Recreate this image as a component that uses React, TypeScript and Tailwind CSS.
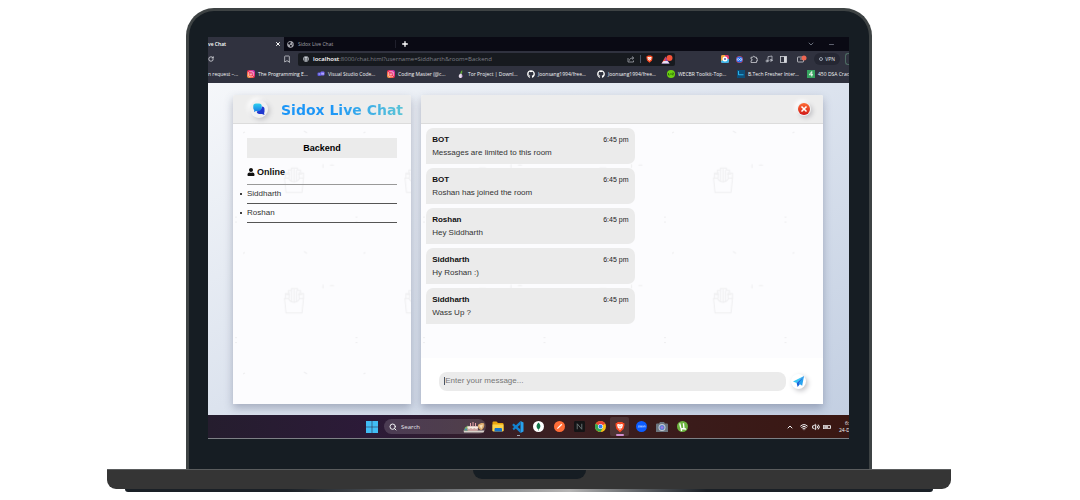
import type { ReactNode } from "react";
import {
  ChevronDown,
  ChevronUp,
  Bookmark,
  Minus,
  Music,
  Plus,
  RotateCw,
  Search,
  Volume2,
  Wifi,
  X,
} from "lucide-react";
import { FaBatteryThreeQuarters, FaGithub, FaGlobe, FaGlobeAmericas, FaInstagram, FaUser } from "react-icons/fa";

const messages = [
  { name: "BOT", text: "Messages are limited to this room", time: "6:45 pm" },
  { name: "BOT", text: "Roshan has joined the room", time: "6:45 pm" },
  { name: "Roshan", text: "Hey Siddharth", time: "6:45 pm" },
  { name: "Siddharth", text: "Hy Roshan :)", time: "6:45 pm" },
  { name: "Siddharth", text: "Wass Up ?", time: "6:45 pm" },
];

const users = ["Siddharth", "Roshan"];

function Instagram() {
  return (
    <span className="flex size-[8px] items-center justify-center rounded-[2px] bg-linear-to-tr from-[#fdb13c] via-[#f0264f] to-[#c218c8] text-white">
      <FaInstagram className="size-[6px]" />
    </span>
  );
}

function BraveLion({ className }: { className: string }) {
  return (
    <svg viewBox="0 0 20 22" className={className}>
      <path d="M5.5 1h9l2 2 2-.2L19 7l-1.800 8.200L10 21.500l-7.200-6.300L1 7l.5-4.200 2 .2z" fill="#fb4b22" />
      <path d="M4 6l3-1 3 1 3-1 3 1-1.500 6L10 17l-4.500-5z" fill="#fff" />
      <path d="M6.500 8l2.500.8-.5 2zM13.500 8l-2.500.8.5 2zM10 12l1.500 1.500L10 15l-1.500-1.500z" fill="#fb4b22" />
    </svg>
  );
}

const bookmarks: { label: string; icon: ReactNode }[] = [
  { label: "The Programming E...", icon: <Instagram /> },
  {
    label: "Visual Studio Code...",
    icon: (
      <svg viewBox="0 0 16 16" className="size-[8px]">
        <rect x="1" y="5" width="7" height="7" rx="2" fill="#5b57e0" />
        <rect x="7" y="3" width="8" height="8" rx="2" fill="#7b6cf6" />
        <path d="M3 8h3M10 6v3M12.500 6v3" stroke="#fff" strokeWidth="1.200" />
      </svg>
    ),
  },
  { label: "Coding Master (@c...", icon: <Instagram /> },
  {
    label: "Tor Project | Downl...",
    icon: (
      <svg viewBox="0 0 16 16" className="size-[8px]">
        <path d="M7 7c-4 2-5 8-1 9 5 1 6-5 3-9z" fill="#e6dcea" />
        <path d="M8 8c3 3 2 7-1 8 4-.500 6-4 1-8z" fill="#8c4aa6" />
        <path d="M7 7c0-3 1-5 4-7-1 2-1 3-1 4 2-1 2-1 3-1-3 1-3 2-4 5z" fill="#5fae35" />
      </svg>
    ),
  },
  { label: "Joonsang1994/free...", icon: <FaGithub className="size-[8px] text-white" /> },
  { label: "Joonsang1994/free...", icon: <FaGithub className="size-[8px] text-white" /> },
  {
    label: "WECBR Toolkit-Top...",
    icon: (
      <svg viewBox="0 0 16 16" className="size-[8px]">
        <circle cx="8" cy="8" r="8" fill="#6bd110" />
        <path d="M3 6v4h2.500M8 6v4M10.500 6H13l-2 4h2" stroke="#1f5206" strokeWidth="1.400" fill="none" />
      </svg>
    ),
  },
  {
    label: "B.Tech Fresher Inter...",
    icon: (
      <svg viewBox="0 0 16 16" className="size-[8px]">
        <rect width="16" height="16" fill="#0d4f7a" />
        <path d="M3 2v8M3 9.500h10" stroke="#29b1e8" strokeWidth="2" />
      </svg>
    ),
  },
  {
    label: "450 DSA Cracker",
    icon: (
      <svg viewBox="0 0 16 16" className="size-[8px]">
        <rect width="16" height="16" fill="#36a45f" />
        <path d="M9.500 13V3L4.500 9.500H12" stroke="#fff" strokeWidth="1.800" fill="none" />
      </svg>
    ),
  },
];

function BrowserChrome() {
  return (
    <header className="font-['Open_Sans','Noto_Sans',sans-serif] text-[6px] leading-[8px] text-gray-200">
      <div className="flex h-[14px] items-center bg-[#0a0a14]">
        <div className="flex h-full w-[76px] items-center justify-between bg-[#30323f] pr-[3px]">
          <span className="text-[5px] font-semibold text-white">ve Chat</span>
          <button type="button" aria-label="Close tab">
            <X className="size-[6px] text-white" strokeWidth={4} />
          </button>
        </div>
        <button type="button" className="flex h-full w-[111px] items-center gap-[4px] pl-[3px] text-[#a3a3ab]">
          <FaGlobeAmericas className="size-[7px]" />
          <span className="text-[5px]">Sidox Live Chat</span>
        </button>
        <span className="h-[8px] w-px bg-[#20202c]" />
        <button type="button" aria-label="New tab" className="ml-[5px]">
          <Plus className="size-[8px] text-white" strokeWidth={4} />
        </button>
        <button type="button" aria-label="Search tabs" className="ml-auto">
          <ChevronDown className="size-[8px] text-gray-400" />
        </button>
        <button type="button" aria-label="Minimise" className="mr-[14px] ml-[13px]">
          <Minus className="size-[7px] text-gray-400" />
        </button>
      </div>

      <div className="flex h-[16px] items-center bg-[#30323f]">
        <button type="button" aria-label="Reload">
          <RotateCw className="size-[6px]" strokeWidth={3} />
        </button>
        <button type="button" aria-label="Bookmark this page" className="ml-[69px]">
          <Bookmark className="size-[8px]" />
        </button>
        <div className="ml-[7px] flex h-[13px] flex-1 items-center rounded-[2px] bg-[#171a1f] pr-[2px] pl-[5px]">
          <FaGlobe className="size-[6px] text-gray-300" />
          <span className="ml-[4px] text-[6px] whitespace-nowrap text-[#7d7f86]">
            <span className="font-semibold text-white">localhost</span>:8000/chat.html?username=Siddharth&amp;room=Backend
          </span>
          <svg viewBox="0 0 16 16" className="ml-auto size-[8px]">
            <path d="M2 6v8h11v-3M5 11c0-4 3-5 8-5M10 3l3.500 3L10 9" fill="none" stroke="#a4a7ae" strokeWidth="1.600" />
          </svg>
          <span className="mx-[5px] h-[8px] w-px bg-gray-600" />
          <BraveLion className="h-[8px] w-[7px]" />
          <svg viewBox="0 0 24 18" className="ml-[8px] h-[9px] w-[12px]">
            <path d="M1 17L9 3l4 8z" fill="#f04a3a" />
            <path d="M9 3l8 14H1l8-4z" fill="#7d3fc0" />
            <path d="M1 17l4-5h8l4 5z" fill="#e9e2f2" />
            <circle cx="17" cy="6" r="6" fill="#f5533a" />
          </svg>
        </div>
        <div className="mr-[1px] ml-[46px] flex items-center gap-[7px] text-gray-300">
          <svg viewBox="0 0 16 16" className="size-[8px]">
            <rect width="16" height="16" rx="3" fill="#e43b6d" />
            <path d="M0 8h16v5a3 3 0 01-3 3H3a3 3 0 01-3-3z" fill="#3fb4e5" />
            <path d="M0 3a3 3 0 013-3h5v8L0 12z" fill="#f2a93b" />
            <circle cx="8" cy="8" r="5" fill="#fff" />
            <circle cx="8" cy="8" r="2" fill="#5555aa" />
          </svg>
          <svg viewBox="0 0 16 16" className="size-[7px]">
            <circle cx="8" cy="8" r="8" fill="#d94055" />
            <circle cx="8" cy="8" r="7" fill="#256ff0" />
            <path d="M8 8c-2-3-5-3-5 0s3 3 5 0 5-3 5 0-3 3-5 0z" stroke="#fff" strokeWidth="1.500" fill="none" />
          </svg>
          <svg viewBox="0 0 16 16" className="size-[8px]">
            <path
              d="M2 4.500h3.500a2 2 0 114 0H13V8a2 2 0 110 3.500V15H2v-3.500a1.800 1.800 0 100-3.500z"
              fill="none"
              stroke="#d5d7dc"
              strokeWidth="1.500"
            />
          </svg>
          <Music className="size-[8px]" />
          <svg viewBox="0 0 14 14" className="size-[7px]">
            <rect x="1" y="1" width="12" height="12" fill="none" stroke="#d5d7dc" strokeWidth="1.600" />
            <path d="M8 1h5v12H8z" fill="#d5d7dc" />
          </svg>
          <svg viewBox="0 0 20 16" className="ml-[3px] h-[8px] w-[10px]">
            <rect x="1" y="4" width="12" height="10" rx="1" fill="none" stroke="#d5d7dc" strokeWidth="1.500" />
            <path d="M6 8h7" stroke="#d5d7dc" strokeWidth="1.500" />
            <circle cx="14" cy="6" r="5" fill="#ee6652" />
          </svg>
        </div>
        <button type="button" className="ml-[6px] flex h-[12px] items-center gap-[2px] rounded-full bg-[#252733] px-[5px] text-[5px]">
          <span className="size-[4px] rounded-full border border-gray-400" />
          VPN
        </button>
        <span className="ml-[5px] h-[12px] w-[4px] rounded-l-[3px] border border-r-0 border-[#4d6a62]" />
      </div>

      <nav aria-label="Bookmarks" className="flex h-[16px] items-center overflow-hidden bg-[#30323f] pb-[2px] text-[5px] whitespace-nowrap text-gray-100">
        <a href="#request" className="w-[39px] shrink-0">
          n request –...
        </a>
        {bookmarks.map((bookmark, index) => (
          <a key={index} href={`#bookmark-${index}`} className="flex w-[70px] shrink-0 items-center gap-[3px]">
            <span className="flex size-[8px] shrink-0 items-center justify-center">{bookmark.icon}</span>
            {bookmark.label}
          </a>
        ))}
      </nav>
    </header>
  );
}

/* Repeating line-art wallpaper behind both panels. */
function Wallpaper({ id }: { id: string }) {
  return (
    <svg aria-hidden="true" className="absolute inset-0 size-full">
      <defs>
        <pattern id={id} width="120.5" height="120.5" patternUnits="userSpaceOnUse">
          <g fill="none" stroke="#eeeef0" strokeWidth="1">
            <path d="M51.500 54h4c2 5 9 5 11 0h4l-1.500 14.500H53z" />
            <path d="M52.500 54v-5h3v-3h3v-2h6v2h3v3h3v5" />
            <path d="M56 54v-6M58.500 57v-11M61 58V45M63.500 57V46M66 54v-6M53 50h4M65 50h4" />
            <path d="M10 9l2-1M71 7l3 2M90 40v4M97 41h4M2 93h2M2 98h2" />
          </g>
        </pattern>
      </defs>
      <rect width="100%" height="100%" fill={`url(#${id})`} />
    </svg>
  );
}

function Sidebar() {
  return (
    <aside className="flex w-[30.200%] flex-col rounded-t-[2px] bg-[#fcfcfe] shadow-[0_4px_8px_rgba(60,70,100,0.35)]">
      <div className="flex h-[29px] items-center rounded-t-[2px] border-b border-[#dcdcdc] bg-[#ededed] pl-[17px]">
        <span className="flex size-[18px] items-center justify-center rounded-full bg-[#f1f1f1] shadow-[2px_2px_5px_#c4c4c8,-2px_-2px_5px_#ffffff]">
          <svg viewBox="0 0 24 24" className="size-[12px]">
            <defs>
              <linearGradient id="bubble" x1="0" y1="0" x2="0" y2="1">
                <stop offset="0" stopColor="#2fd0ee" />
                <stop offset="1" stopColor="#1478e6" />
              </linearGradient>
            </defs>
            <path d="M6 1h6a5.500 5.500 0 015.500 5.500v4A5.500 5.500 0 0112 16H6l-4 2 .500-4A5.500 5.500 0 01.500 9V6.500A5.500 5.500 0 016 1z" fill="url(#bubble)" />
            <path d="M18 7a5 5 0 015 5v5c0 1.500-.500 2.500-1 3l1 4-5-2h-5a5.500 5.500 0 01-5.500-5.500c5 0 10-2 10.500-9.500z" fill="#2038cf" />
          </svg>
        </span>
        <h1 className="ml-[13px] bg-linear-to-r from-[#1c96f7] from-40% to-[#5cc4d6] bg-clip-text pt-[1px] font-['DejaVu_Sans',sans-serif] text-[14px] leading-[20px] font-bold whitespace-nowrap text-transparent">
          Sidox Live Chat
        </h1>
      </div>
      <div className="relative flex-1 overflow-hidden">
        <Wallpaper id="sidebar-pattern" />
        <div className="relative px-[14px] pt-[14px]">
          <h2 className="bg-[#ebebeb] text-center text-[9px] leading-[20px] font-bold text-black">Backend</h2>
          <h3 className="mt-[8px] flex items-center gap-[2px] text-[9px] leading-[12px] font-bold text-[#111]">
            <FaUser className="size-[8px]" />
            Online
          </h3>
          <ul className="mt-[6px] list-none border-t border-[#999] text-[8px] leading-[18px] text-[#333]">
            {users.map((user) => (
              <li key={user} className="relative border-b border-[#555]">
                <span className="absolute top-[8px] -left-[7px] size-[2px] rounded-full bg-black" />
                {user}
              </li>
            ))}
          </ul>
        </div>
      </div>
    </aside>
  );
}

function ChatPanel() {
  return (
    <main className="flex flex-1 flex-col rounded-t-[2px] bg-white shadow-[0_4px_8px_rgba(60,70,100,0.35)]">
      <div className="flex h-[29px] items-center justify-end rounded-t-[2px] border-b border-[#dcdcdc] bg-[#ededed] pr-[12px]">
        <button
          type="button"
          aria-label="Leave room"
          className="flex size-[14px] items-center justify-center rounded-full bg-[#f1f1f1] shadow-[2px_2px_4px_#c4c4c8,-2px_-2px_4px_#ffffff]"
        >
          <span className="flex size-[12px] items-center justify-center rounded-full bg-linear-to-b from-[#ff6a35] to-[#d00d17] text-white">
            <X className="size-[8px]" strokeWidth={5} />
          </span>
        </button>
      </div>
      <div className="relative overflow-hidden bg-[#fcfcfe]">
        <Wallpaper id="chat-pattern" />
        <ol className="relative flex flex-col gap-[4px] pt-[4px] pb-[34px] pl-[5px]">
          {messages.map((message, index) => (
            <li key={index} className="w-[52.500%] rounded-[7px] rounded-bl-none bg-[#ebebeb] px-[6px] pt-[5px] pb-[5px] leading-[13px]">
              <div className="flex justify-between">
                <span className="text-[8px] font-bold text-[#111]">{message.name}</span>
                <time className="text-[7px] text-[#222]">{message.time}</time>
              </div>
              <p className="text-[8px] text-[#333]">{message.text}</p>
            </li>
          ))}
        </ol>
      </div>
      <form className="flex flex-1 items-center pr-[17px] pl-[18px]" onSubmit={(event) => event.preventDefault()}>
        <label className="flex h-[19px] flex-1 items-center rounded-[8px] bg-[#ebebeb] pl-[5px]">
          <span className="h-[8px] w-px bg-gray-600" />
          <input
            type="text"
            aria-label="Message"
            placeholder="Enter your message..."
            className="w-full bg-transparent text-[8px] leading-[12px] outline-none placeholder:text-[#777]"
          />
        </label>
        <button
          type="submit"
          aria-label="Send"
          className="ml-[5px] flex size-[15px] items-center justify-center rounded-full bg-white shadow-[2px_2px_5px_#c4c4c8]"
        >
          <svg viewBox="0 0 24 24" className="size-[11px]">
            <path d="M24 0L0 12l8 3z" fill="#38c6f4" />
            <path d="M24 0L8 15l2 9 4-5z" fill="#1560d8" />
            <path d="M24 0L12 16l8 5z" fill="#2aa4f0" />
          </svg>
        </button>
      </form>
    </main>
  );
}

const apps: { name: string; icon: ReactNode; active?: boolean; running?: boolean }[] = [
  {
    name: "File Explorer",
    icon: (
      <svg viewBox="0 0 24 22" className="h-[11px] w-[12px]">
        <path d="M1 3a2 2 0 012-2h6l3 3h9a2 2 0 012 2v14H1z" fill="#e9a50f" />
        <path d="M1 7h22v12a2 2 0 01-2 2H3a2 2 0 01-2-2z" fill="#fcd34b" />
        <path d="M6 14h12a2 2 0 012 2v5H5v-5z" fill="#1674c9" />
      </svg>
    ),
  },
  {
    name: "Visual Studio Code",
    running: true,
    icon: (
      <svg viewBox="0 0 24 24" className="size-[12px]">
        <path d="M17 0l6 3v18l-6 3z" fill="#27a1ee" />
        <path d="M1 7l2.500-2L17 17v7L1 9z" fill="#1382cf" />
        <path d="M1 15l2.500 3.500L17 7V0L1 15z" fill="#1382cf" />
      </svg>
    ),
  },
  {
    name: "MongoDB Compass",
    icon: (
      <svg viewBox="0 0 24 24" className="size-[11px]">
        <circle cx="12" cy="12" r="12" fill="#fff" />
        <path d="M12 3c6 6 5 11 .5 15v3h-1v-3C7 14 6 9 12 3z" fill="#12774a" />
      </svg>
    ),
  },
  {
    name: "Postman",
    icon: (
      <svg viewBox="0 0 24 24" className="size-[11px]">
        <circle cx="12" cy="12" r="12" fill="#ff6c37" />
        <path d="M6 18l2-4 8-8 2 2-8 8z" fill="#fff" />
      </svg>
    ),
  },
  {
    name: "Notion Calendar",
    icon: (
      <svg viewBox="0 0 24 24" className="size-[11px]">
        <rect width="24" height="24" rx="3" fill="#141416" />
        <path d="M7 18V6l10 12V6" stroke="#6f7778" strokeWidth="2" fill="none" />
      </svg>
    ),
  },
  {
    name: "Chrome",
    icon: (
      <svg viewBox="0 0 24 24" className="size-[11px]">
        <circle cx="12" cy="12" r="12" fill="#fbc116" />
        <path d="M12 12L1.600 6a12 12 0 0120.800 0z" fill="#ea4335" />
        <path d="M12 12L1.600 6A12 12 0 0012 24l5-9z" fill="#34a853" />
        <circle cx="12" cy="12" r="5.500" fill="#fff" />
        <circle cx="12" cy="12" r="4.300" fill="#2f7cf0" />
      </svg>
    ),
  },
  { name: "Brave", active: true, icon: <BraveLion className="h-[12px] w-[10px]" /> },
  {
    name: "Zoom",
    icon: (
      <svg viewBox="0 0 24 24" className="size-[11px]">
        <circle cx="12" cy="12" r="12" fill="#0b5cff" />
        <path d="M5 10.500h3l-3 3h3M10 10.500h2v3h-2zM14 10.500h1v3h-1M17 14v-3.500h3V14" stroke="#fff" strokeWidth="1" fill="none" />
      </svg>
    ),
  },
  {
    name: "Camera",
    icon: (
      <svg viewBox="0 0 24 20" className="h-[10px] w-[12px]">
        <path d="M0 5a2 2 0 012-2h4l2-3h8l2 3h4a2 2 0 012 2v15H0z" fill="#6c7680" />
        <circle cx="12" cy="11" r="7" fill="#c4ccd4" />
        <circle cx="12" cy="11" r="5" fill="#5a7fd0" />
        <circle cx="12" cy="11" r="2.500" fill="#a57ae6" />
      </svg>
    ),
  },
  {
    name: "uTorrent",
    icon: (
      <svg viewBox="0 0 24 24" className="size-[11px]">
        <circle cx="12" cy="12" r="12" fill="#6cb33f" />
        <path d="M6 5l2 9c1 4 7 4 7 0l-1-9M15 14c0 3 2 4 5 3M9 16l1 6" stroke="#fff" strokeWidth="3" fill="none" />
      </svg>
    ),
  },
];

function Taskbar() {
  return (
    <footer className="flex h-[24px] items-center overflow-hidden border-b border-[#7d8085] bg-linear-to-r from-[#241d2e] via-[#3a1f22] via-50% to-[#3a1712] font-['Open_Sans','Noto_Sans',sans-serif] text-[6px] text-gray-100">
      <div className="flex h-full flex-1 items-center bg-linear-to-r from-[#251d2e] via-[#2c1a38] via-25% to-transparent to-50% pl-[158px]">
        <button type="button" aria-label="Start">
          <svg viewBox="0 0 23 23" className="size-[12px]">
            <path d="M0 0h11v11H0zM12 0h11v11H12zM0 12h11v11H0zM12 12h11v11H12z" fill="#41bdf5" />
          </svg>
        </button>
        <label className="ml-[6px] flex h-[15px] w-[102px] items-center rounded-full bg-white/15 pr-[1px] pl-[5px]">
          <Search className="size-[8px] shrink-0" strokeWidth={3} />
          <input
            type="search"
            aria-label="Search"
            placeholder="Search"
            className="ml-[4px] w-full min-w-0 bg-transparent text-[6px] leading-[10px] outline-none placeholder:text-gray-200"
          />
          <svg viewBox="0 0 44 24" className="h-[12px] w-[22px] shrink-0">
            <path d="M1 19h42l-2 4H2z" fill="#d9d2cb" />
            <path d="M4 13l6-4 4 10H2z" fill="#7eb56b" />
            <rect x="9" y="10" width="21" height="10" rx="3" fill="#c9a3a0" />
            <path d="M9 11h21v3l-4 2-3-2-4 2-3-2-4 2-3-2z" fill="#f5ece4" />
            <path d="M15 10V4M20 10V2M25 10V4" stroke="#e9a3a9" strokeWidth="2" />
            <path d="M30 8c4-4 9-5 12-3 2 4-1 11-5 13-4 0-8-5-7-10z" fill="#d9a86b" />
            <path d="M32 9l8-2-3 9z" fill="#f4ddb5" />
            <circle cx="6" cy="17" r="2" fill="#4786c6" />
          </svg>
        </label>
        <div className="ml-[1px] flex">
          {apps.map((app) => (
            <button
              key={app.name}
              type="button"
              aria-label={app.name}
              className={
                app.active
                  ? "relative mr-[2px] flex h-[19px] w-[19px] items-center justify-center rounded-[2px] bg-white/10"
                  : "relative flex h-[19px] w-[20px] items-center justify-center odd:w-[21px]"
              }
            >
              {app.icon}
              {app.active && <span className="absolute bottom-0 h-[2px] w-[8px] rounded-full bg-[#cf8fd0]" />}
              {app.running && <span className="absolute bottom-0 h-px w-[3px] bg-gray-400" />}
            </button>
          ))}
        </div>
        <div className="mr-[8px] ml-auto flex items-center">
          <ChevronUp className="mr-[6px] size-[8px]" strokeWidth={3} />
          <Wifi className="mr-[4px] size-[8px]" strokeWidth={3} />
          <Volume2 className="mr-[3px] size-[8px]" strokeWidth={3} />
          <FaBatteryThreeQuarters className="size-[8px]" />
        </div>
      </div>
      <div className="w-[10px] text-[5px] leading-[7px] whitespace-nowrap">
        <p className="pl-[6px]">6:45 PM</p>
        <p>24-Dec</p>
      </div>
    </footer>
  );
}

export default function App() {
  return (
    <div className="min-h-screen bg-white pt-[8px] pr-[129px] pl-[107px] font-['Liberation_Sans',Arial,sans-serif]">
      <div className="mx-[79px] rounded-t-[28px] border-[3px] border-b-0 border-[#3e4344] bg-[#161d23] pt-[26px] pr-[20px] pb-[30px] pl-[19px]">
        <div className="overflow-hidden">
          <BrowserChrome />
          <div className="flex items-stretch gap-[10px] bg-linear-to-br from-[#f5f7fa] to-[#c3cfe2] pt-[12px] pr-[26px] pb-[11px] pl-[25px]">
            <Sidebar />
            <div className="flex min-h-[309px] flex-1">
              <ChatPanel />
            </div>
          </div>
          <Taskbar />
        </div>
      </div>
      <div className="flex h-[20px] justify-center rounded-b-[9px] border-t border-[#5a5c5d] bg-[#353535]">
        <div className="h-[9px] w-[113px] rounded-b-[9px] bg-[#161d23]" />
      </div>
      <div className="mx-[18px] h-[3px] rounded-b-[3px] bg-linear-to-r from-[#1a2026] from-20% via-[#b5b5b5] via-55% to-[#1a2026] to-72%" />
    </div>
  );
}
